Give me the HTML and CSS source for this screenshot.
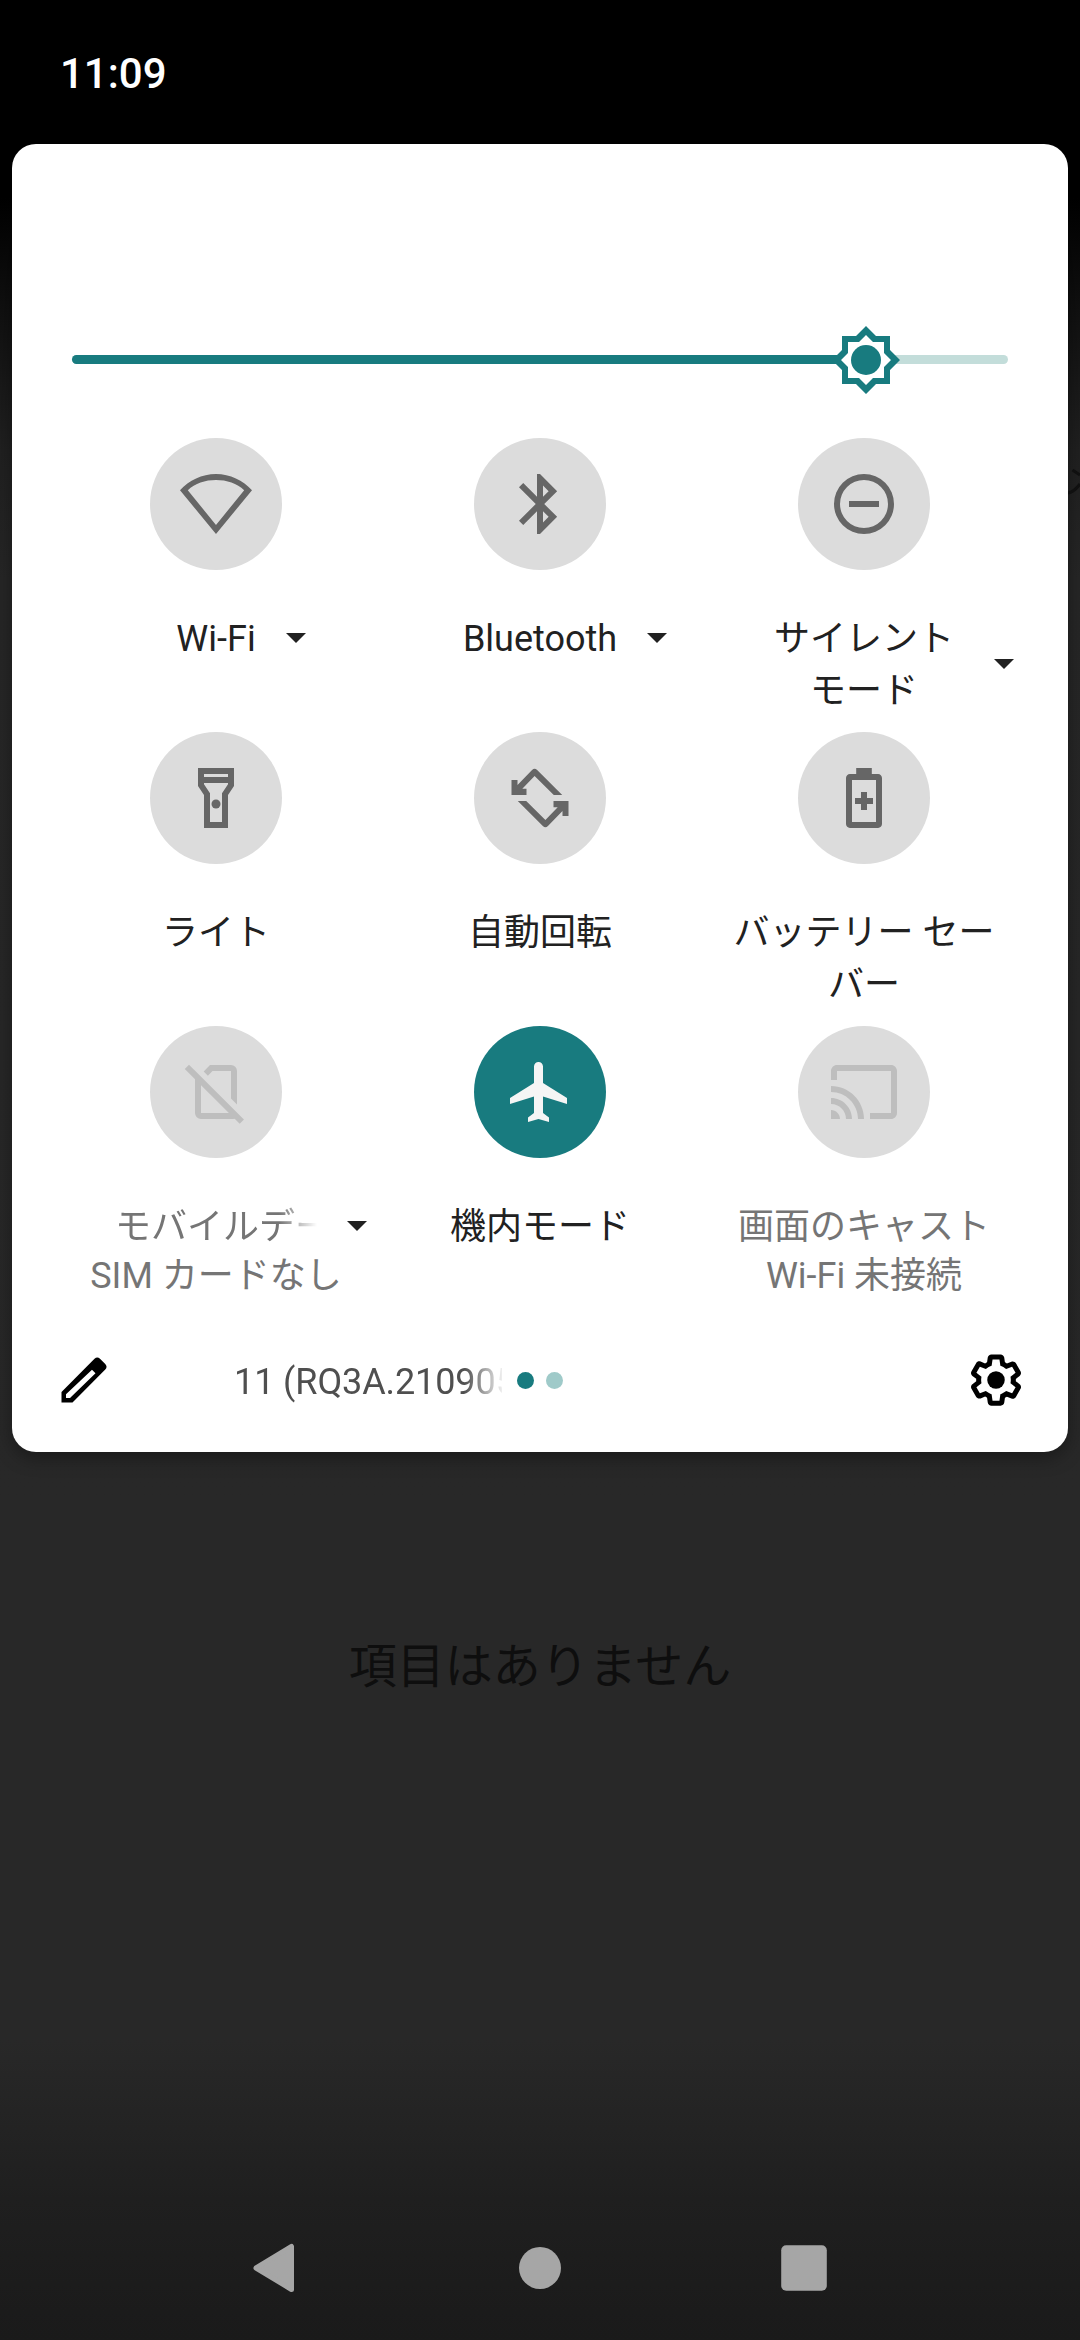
FILE: index.html
```html
<!DOCTYPE html>
<html lang="ja">
<head>
<meta charset="utf-8">
<title>クイック設定</title>
<link rel="stylesheet" href="styles.css">
</head>
<body>
<div class="screen">
  <header class="status">11:09</header>

  <main class="panel">
    <div class="slider">
      <div class="track"><div class="fill" style="width:84.8%"></div></div>
      <svg class="thumb" viewBox="-36 -36 72 72">
        <path class="star" d="M0-34L10-24H24V-10L34 0 24 10V24H10L0 34-10 24H-24V10L-34 0-24-10V-24H-10Z"/>
        <path class="star-gap" d="M0-25L7-18H18V-7L25 0 18 7V18H7L0 25-7 18H-18V7L-25 0-18-7V-18H-7Z"/>
        <circle class="star" r="15"/>
      </svg>
    </div>

    <section class="tiles">
      <div class="tile">
        <div class="disc"><svg class="icon" viewBox="0 0 24 24"><path fill-rule="evenodd" d="M12 4c3.6 0 7 1.1 9.4 3.4L12 19 2.6 7.4C5 5.1 8.4 4 12 4zM12 2C7.3 2 3 4.1 0 7.4L12 22 24 7.4C21 4.1 16.7 2 12 2z"/></svg></div>
        <div class="caption"><span class="label">Wi-Fi</span><svg class="caret" viewBox="0 0 20 10"><path d="M0 0h20L10 10z"/></svg></div>
      </div>
      <div class="tile">
        <div class="disc"><svg class="icon" viewBox="0 0 24 24"><path d="M17.71 7.71L12 2h-1v7.59L6.41 5 5 6.41 10.59 12 5 17.59 6.41 19 11 14.41V22h1l5.71-5.71-4.3-4.29 4.3-4.29zM13 5.83l1.88 1.88L13 9.59V5.83zm1.88 10.46L13 18.17v-3.76l1.88 1.88z"/></svg></div>
        <div class="caption"><span class="label">Bluetooth</span><svg class="caret" viewBox="0 0 20 10"><path d="M0 0h20L10 10z"/></svg></div>
      </div>
      <div class="tile">
        <div class="disc"><svg class="icon" viewBox="0 0 24 24"><path fill-rule="evenodd" d="M12 2a10 10 0 1 0 0 20 10 10 0 0 0 0-20zm0 18a8 8 0 1 1 0-16 8 8 0 0 1 0 16z"/><path d="M7 11h10v2H7z"/></svg></div>
        <div class="caption"><span class="label wide">サイレント<br>モード</span><svg class="caret" viewBox="0 0 20 10"><path d="M0 0h20L10 10z"/></svg></div>
      </div>

      <div class="tile">
        <div class="disc"><svg class="icon" viewBox="0 0 24 24"><path fill-rule="evenodd" d="M18 2H6v6l2 3v11h8V11l2-3V2zm-2 2v1H8V4h8zm-2 6.4V20h-4v-9.6l-2-3V7h8v.4l-2 3z"/><circle cx="12" cy="14" r="1.5"/></svg></div>
        <div class="caption"><span class="label">ライト</span></div>
      </div>
      <div class="tile">
        <div class="disc"><svg class="icon" viewBox="0 0 24 24"><path id="turn" d="M2.5 11V6h2v1.7l4.85-5a1.2 1.2 0 0 1 1.7 0L19.4 11h-2.8L10.2 4.7 6.1 8.9h1.4V11z"/><use href="#turn" transform="rotate(180 12 12)"/></svg></div>
        <div class="caption"><span class="label">自動回転</span></div>
      </div>
      <div class="tile">
        <div class="disc"><svg class="icon" viewBox="0 0 24 24"><path fill-rule="evenodd" d="M14.6 4V2H9.4v2H7.3C6.6 4 6 4.6 6 5.3v15.4c0 .7.6 1.3 1.3 1.3h9.4c.7 0 1.3-.6 1.3-1.3V5.3c0-.7-.6-1.3-1.3-1.3zM16 20H8V6h8z"/><path d="M11 10h2v2h2v2h-2v2h-2v-2H9v-2h2z"/></svg></div>
        <div class="caption"><span class="label">バッテリー セー<br>バー</span></div>
      </div>

      <div class="tile off">
        <div class="disc"><svg class="icon" viewBox="0 0 24 24"><path d="M10 3h7a2 2 0 0 1 2 2v11.15l-2-2V5h-6.17L9.3 6.6 7.9 5.2zM5 6.5l2 2V19h10.5l1.2 1.6c-.4.3-.9.4-1.4.4H7a2 2 0 0 1-2-2z"/><path class="slash" d="M2.3 3.6L20.6 21.9"/></svg></div>
        <div class="caption"><span class="label clipped">モバイルデータ</span><svg class="caret" viewBox="0 0 20 10"><path d="M0 0h20L10 10z"/></svg></div>
        <div class="sub">SIM カードなし</div>
      </div>
      <div class="tile on">
        <div class="disc"><svg class="icon" viewBox="0 0 24 24"><path d="M21 16v-2l-8-5V3.5c0-.83-.67-1.5-1.5-1.5S10 2.67 10 3.5V9l-8 5v2l8-2.5V19l-2 1.5V22l3.5-1 3.5 1v-1.5L13 19v-5.5l8 2.5z"/></svg></div>
        <div class="caption"><span class="label">機内モード</span></div>
      </div>
      <div class="tile off">
        <div class="disc"><svg class="icon" viewBox="0 0 24 24"><path d="M21 3H3c-1.1 0-2 .9-2 2v3h2V5h18v14h-7v2h7c1.1 0 2-.9 2-2V5c0-1.1-.9-2-2-2zM1 18v3h3c0-1.66-1.34-3-3-3zm0-4v2c2.76 0 5 2.24 5 5h2c0-3.87-3.13-7-7-7zm0-4v2c4.97 0 9 4.03 9 9h2c0-6.08-4.93-11-11-11z"/></svg></div>
        <div class="caption"><span class="label">画面のキャスト</span></div>
        <div class="sub">Wi-Fi 未接続</div>
      </div>
    </section>

    <footer class="footer">
      <svg class="tool" viewBox="0 0 24 24"><path fill-rule="evenodd" d="M3 16.8V21h4.4L20.5 7.8a1.6 1.6 0 0 0 0-2.2l-2.1-2.1a1.6 1.6 0 0 0-2.2 0zM4.8 17.7L15.2 7.9l1.4 1.4L6.4 19.2H4.8z"/></svg>
      <span class="build">11 (RQ3A.210905.001)</span>
      <div class="dots"><i class="dot current"></i><i class="dot"></i></div>
      <svg class="tool gear" viewBox="0 0 24 24"><path d="M13.85 22.25h-3.7c-.74 0-1.36-.54-1.45-1.27l-.27-1.89c-.27-.14-.53-.29-.79-.46l-1.8.72c-.7.26-1.47-.03-1.81-.65L2.2 15.53c-.35-.66-.2-1.44.36-1.88l1.53-1.19c-.01-.15-.02-.3-.02-.46 0-.15.01-.31.02-.46l-1.52-1.19c-.59-.45-.74-1.26-.37-1.88l1.85-3.19c.34-.62 1.11-.9 1.79-.63l1.81.73c.26-.17.52-.32.78-.46l.27-1.91c.09-.7.71-1.25 1.44-1.25h3.7c.74 0 1.36.54 1.45 1.27l.27 1.89c.27.14.53.29.79.46l1.8-.72c.71-.26 1.48.03 1.82.65l1.84 3.18c.36.66.2 1.44-.36 1.88l-1.52 1.19c.01.15.02.3.02.46s-.01.31-.02.46l1.52 1.19c.56.45.72 1.23.37 1.86l-1.86 3.22c-.34.62-1.11.9-1.8.63l-1.8-.72c-.26.17-.52.32-.78.46l-.27 1.91c-.1.68-.72 1.22-1.46 1.22zm-3.23-2h2.76l.37-2.55.53-.22c.44-.18.88-.44 1.34-.78l.45-.34 2.38.96 1.38-2.4-2.03-1.58.07-.56c.03-.26.06-.51.06-.78s-.03-.53-.06-.78l-.07-.56 2.03-1.58-1.39-2.4-2.39.96-.45-.35c-.42-.32-.87-.58-1.33-.77l-.52-.22-.37-2.55h-2.76l-.37 2.55-.53.21c-.44.19-.88.44-1.34.79l-.45.33-2.38-.95-1.39 2.39 2.03 1.58-.07.56a7 7 0 0 0-.06.79c0 .26.02.53.06.78l.07.56-2.03 1.58 1.38 2.4 2.39-.96.45.35c.43.33.86.58 1.33.77l.53.22z"/><circle cx="12" cy="12" r="3.5"/></svg>
    </footer>
  </main>

  <p class="empty">項目はありません</p>

  <nav class="nav">
    <svg class="key" viewBox="0 0 60 60"><path d="M45.500 8.500v43L10 30z"/></svg>
    <svg class="key" viewBox="0 0 60 60"><circle cx="30" cy="30" r="21"/></svg>
    <svg class="key" viewBox="0 0 60 60"><rect x="7.200" y="7.200" width="45.600" height="45.600" rx="5"/></svg>
  </nav>

  <svg class="behind" viewBox="0 0 12 30"><path d="M4.500 4L12 9M0 27Q6 26 12 18"/></svg>
</div>
</body>
</html>
```
FILE: styles.css
```css
* { box-sizing: border-box; }

body {
  margin: 0;
  font-family: Roboto, "Noto Sans CJK JP", sans-serif;
}

.screen {
  position: relative;
  display: flex;
  flex-direction: column;
  width: 1080px;
  height: 2340px;
  overflow: hidden;
  background: linear-gradient(#000 0, #000 190px, #101010 310px, #202020 450px, #262626 580px, #282828 1500px, #282828 2040px, #1f1f1f 2200px, #1a1a1a 2340px);
}

.status {
  height: 144px;
  padding: 49px 0 0 60px;
  color: #fff;
  font-size: 42px;
  font-weight: 500;
  line-height: 50px;
}

.panel {
  display: flex;
  flex-direction: column;
  height: 1308px;
  margin: 0 12px;
  padding: 180px 42px 0;
  border-radius: 24px;
  background: #fff;
  box-shadow: 0 6px 18px rgba(0, 0, 0, .35);
}

.slider {
  position: relative;
  height: 72px;
  padding: 31px 18px 0;
}
.track {
  height: 9px;
  border-radius: 5px;
  background: #c3ddda;
}
.fill {
  height: 100%;
  border-radius: 5px 0 0 5px;
  background: #187b7f;
}
.thumb {
  position: absolute;
  top: 0;
  left: 776px;
  width: 72px;
  height: 72px;
}
.star { fill: #187b7f; }
.star-gap { fill: #fff; }

.tiles {
  display: grid;
  grid-template-columns: repeat(3, 324px);
  grid-auto-rows: 294px;
  margin-top: 42px;
}
.tile {
  display: flex;
  flex-direction: column;
  align-items: center;
  color: #212121;
  font-size: 36px;
  line-height: 52px;
  text-align: center;
}
.disc {
  display: flex;
  align-items: center;
  justify-content: center;
  flex: none;
  width: 132px;
  height: 132px;
  margin-bottom: 43px;
  border-radius: 50%;
  background: #dcdcdc;
}
.icon {
  width: 72px;
  height: 72px;
  fill: #666;
}
.caption {
  display: grid;
  grid-template-columns: 1fr auto 1fr;
  align-items: center;
  width: 100%;
}
.label {
  grid-column: 2;
  white-space: nowrap;
}
.wide { width: 200px; }
.clipped {
  width: 202px;
  overflow: hidden;
  text-align: left;
  -webkit-mask-image: linear-gradient(90deg, #000 164px, transparent 202px);
  mask-image: linear-gradient(90deg, #000 164px, transparent 202px);
}
.caret {
  width: 20px;
  height: 10px;
  margin: 0 0 3px 30px;
  fill: #212121;
}
.sub { line-height: 46px; white-space: nowrap; }
.off .label,
.off .sub { color: #757575; }
.off .icon { fill: #bebebe; }
.slash { fill: none; stroke: #bebebe; stroke-width: 2; }
.on .disc { background: #187b7f; }
.on .icon { fill: #f5f5f5; }

.footer {
  display: flex;
  align-items: center;
  height: 84px;
  margin-top: 18px;
}
.tool {
  flex: none;
  width: 60px;
  height: 60px;
  fill: #000;
}
.build {
  width: 268px;
  margin-left: 120px;
  padding-top: 3px;
  overflow: hidden;
  color: #4f4f4f;
  font-size: 36px;
  line-height: 52px;
  letter-spacing: -.1px;
  white-space: nowrap;
  -webkit-mask-image: linear-gradient(90deg, #000 230px, transparent 272px);
  mask-image: linear-gradient(90deg, #000 230px, transparent 272px);
}
.dots { display: flex; gap: 12px; margin-left: 15px; }
.dot {
  width: 17px;
  height: 17px;
  border-radius: 50%;
  background: #9fcac9;
}
.current { background: #187b7f; }
.gear { margin-left: auto; }

.empty {
  margin: 180px 0 0;
  color: #0e0e0e;
  font-size: 48px;
  line-height: 70px;
  text-align: center;
}

.nav {
  display: flex;
  justify-content: center;
  gap: 204px;
  margin-top: auto;
  padding-bottom: 42px;
}
.key {
  width: 60px;
  height: 60px;
  fill: #a6a6a6;
  stroke-linejoin: round;
}
.key path { stroke: #a6a6a6; stroke-width: 5; }

.behind {
  position: absolute;
  top: 466px;
  left: 1068px;
  width: 12px;
  height: 30px;
  fill: none;
  stroke: #101010;
  stroke-width: 3;
}
```
